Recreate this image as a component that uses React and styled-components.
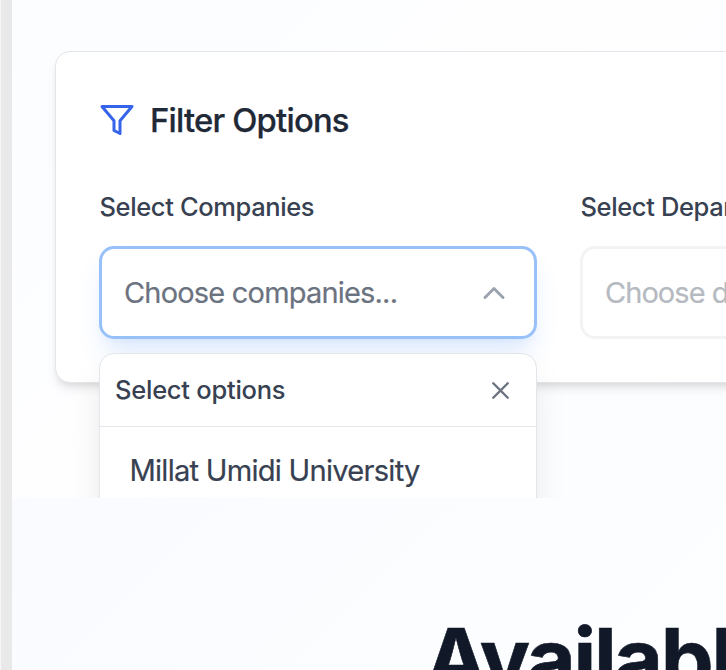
import React from "react";
import styled, { createGlobalStyle } from "styled-components";

const GlobalStyle = createGlobalStyle`
  *, *::before, *::after { box-sizing: border-box; }
  html, body { margin: 0; height: 100%; overflow: hidden; }
  body { font-family: "Inter", "Liberation Sans", sans-serif; }
`;

const Page = styled.div`
  display: flex;
  width: 100vw;
  height: 670px;
  overflow: hidden;
  background: #fff;
`;

const Rail = styled.div`
  flex: 0 0 12px;
  background: #e9e9e9;
  border-left: 1px solid #f6f6f6;
`;

const Content = styled.main`
  flex: 1;
  min-width: 0;
  display: flex;
  flex-direction: column;
`;

const FilterSection = styled.section`
  flex: 0 0 498px;
  padding: 51px 0 0 43px;
  overflow: hidden;
  background: linear-gradient(135deg, #fbfdff 0%, #fefeff 45%, #fcfdff 100%);
`;

const Card = styled.div`
  width: 1050px;
  height: 332px;
  padding: 50px 43px 0;
  background: #fff;
  border: 1px solid #e2e5ea;
  border-radius: 15px;
  box-shadow: 0 7px 11px -2px rgba(0, 0, 0, 0.1), 0 4px 7px -4px rgba(0, 0, 0, 0.1);
`;

const CardHeader = styled.div`
  display: flex;
  align-items: center;
  gap: 15px;
  height: 36px;
`;

const CardTitle = styled.h2`
  margin: 0;
  font-size: 32.8px;
  line-height: 36px;
  font-weight: 500;
  letter-spacing: -0.8px;
  -webkit-text-stroke: 0.25px currentColor;
  color: #1f2937;
  white-space: nowrap;
`;

const Fields = styled.div`
  display: grid;
  grid-template-columns: 438px 438px;
  column-gap: 43px;
  margin-top: 51px;
`;

const Field = styled.div`
  position: relative;
`;

const Label = styled.div`
  height: 57px;
  padding-left: 0.5px;
  font-size: 25.5px;
  line-height: 36px;
  font-weight: 500;
  letter-spacing: -0.38px;
  color: #374151;
  white-space: nowrap;
`;

const Trigger = styled.div`
  display: flex;
  align-items: center;
  justify-content: space-between;
  height: 93px;
  padding: 0 22px;
  border: 3px solid ${(p) => (p.$open ? "#98c1fa" : "#f2f3f5")};
  border-radius: 15px;
  background: #fff;
  color: ${(p) => (p.$open ? "#6b7280" : "#b5b9c0")};
  font-size: 29px;
  letter-spacing: ${(p) => (p.$open ? "-0.81px" : "-0.95px")};
  white-space: nowrap;
  box-shadow: ${(p) =>
    p.$open
      ? "0 18px 27px -5px rgba(59, 130, 246, 0.16), 0 7px 11px -7px rgba(59, 130, 246, 0.12)"
      : "none"};
`;

const TriggerText = styled.span`
  -webkit-text-stroke: 0.2px currentColor;
`;

const Menu = styled.div`
  position: absolute;
  top: 164px;
  left: 0;
  right: 0;
  height: 440px;
  background: #fff;
  border: 1px solid #e2e5ea;
  border-radius: 15px;
  box-shadow: 0 18px 36px -5px rgba(0, 0, 0, 0.1), 0 15px 18px -11px rgba(0, 0, 0, 0.06);
`;

const MenuHeader = styled.div`
  display: flex;
  align-items: center;
  justify-content: space-between;
  height: 73px;
  padding: 0 21px 0 15px;
  border-bottom: 1px solid #e5e7eb;
  font-size: 25.5px;
  line-height: 30px;
  font-weight: 500;
  letter-spacing: -0.25px;
  color: #374151;
`;

const Option = styled.div`
  padding: 22px 29.5px;
  font-size: 29.15px;
  line-height: 44px;
  letter-spacing: -0.76px;
  -webkit-text-stroke: 0.2px currentColor;
  color: #374151;
  white-space: nowrap;
`;

const ListingSection = styled.section`
  flex: 1;
  min-height: 0;
  overflow: hidden;
  padding: 117px 0 0 413px;
  background: linear-gradient(135deg, #f9fbff 0%, #fcfdff 60%, #fdfeff 100%);
`;

const Heading = styled.h1`
  margin: 0;
  font-size: 84px;
  line-height: 88px;
  font-weight: 700;
  letter-spacing: -2.3px;
  -webkit-text-stroke: 0.6px currentColor;
  color: #111827;
  white-space: nowrap;
`;

const Icon = styled.svg`
  flex: none;
  display: block;
  width: ${(p) => p.$size}px;
  height: ${(p) => p.$size}px;
  margin-top: ${(p) => p.$drop || 0}px;
  fill: none;
  stroke: ${(p) => p.$color};
  stroke-width: 2;
  stroke-linecap: round;
  stroke-linejoin: round;
`;

function FilterIcon() {
  return (
    <Icon viewBox="0 0 24 24" $size={36} $color="#3563e9">
      <polygon points="22 3 2 3 10 12.46 10 19 14 21 14 12.46 22 3" />
    </Icon>
  );
}

function ChevronUp() {
  return (
    <Icon viewBox="0 0 24 24" $size={36} $drop={1} $color="#9ca3af">
      <path d="m18 15-6-6-6 6" />
    </Icon>
  );
}

function CloseIcon() {
  return (
    <Icon viewBox="0 0 24 24" $size={29} $drop={1} $color="#6b7280">
      <path d="M18 6 6 18M6 6l12 12" />
    </Icon>
  );
}

export default function App() {
  return (
    <>
      <GlobalStyle />
      <Page>
        <Rail />
        <Content>
          <FilterSection>
            <Card>
              <CardHeader>
                <FilterIcon />
                <CardTitle>Filter Options</CardTitle>
              </CardHeader>
              <Fields>
                <Field>
                  <Label>Select Companies</Label>
                  <Trigger $open>
                    <TriggerText>Choose companies...</TriggerText>
                    <ChevronUp />
                  </Trigger>
                  <Menu>
                    <MenuHeader>
                      <span>Select options</span>
                      <CloseIcon />
                    </MenuHeader>
                    <Option>Millat Umidi University</Option>
                  </Menu>
                </Field>
                <Field>
                  <Label>Select Departments</Label>
                  <Trigger>
                    <TriggerText>Choose departments...</TriggerText>
                  </Trigger>
                </Field>
              </Fields>
            </Card>
          </FilterSection>
          <ListingSection>
            <Heading>Available</Heading>
          </ListingSection>
        </Content>
      </Page>
    </>
  );
}
